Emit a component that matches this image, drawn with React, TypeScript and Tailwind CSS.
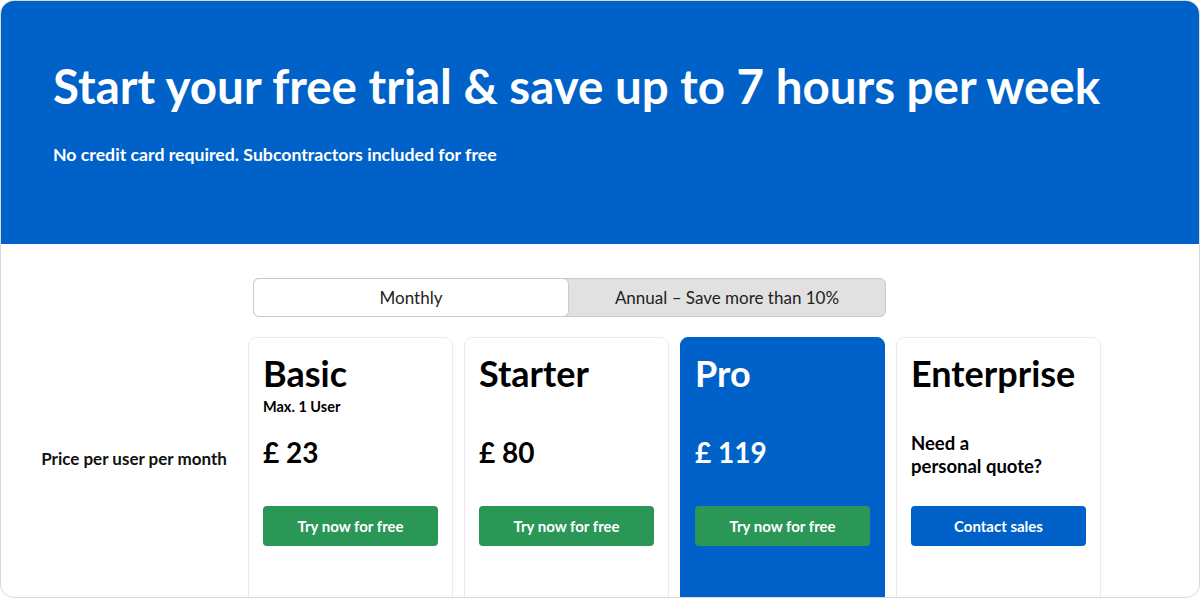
// Pricing header + plan cards, trial signup page.
const plans = [
  { name: "Basic", note: "Max. 1 User", price: "£ 23", cta: "Try now for free", featured: false },
  { name: "Starter", note: "", price: "£ 80", cta: "Try now for free", featured: false },
  { name: "Pro", note: "", price: "£ 119", cta: "Try now for free", featured: true },
];

const PlanCard = ({
  name,
  note,
  price,
  cta,
  featured,
}: {
  name: string;
  note: string;
  price: string;
  cta: string;
  featured: boolean;
}) => (
  <div
    className={`flex h-[300px] w-[205px] flex-col rounded-t-[8px] border px-[14px] pt-[14px] ${
      featured
        ? "border-[#0062c8] bg-[#0062c8] text-white"
        : "border-[#ebebeb] bg-white text-black"
    }`}
  >
    <h3 className="h-[43px] text-[36px] font-bold leading-[1.2]">{name}</h3>
    <div className="h-[41px] pt-[3px] text-[14.5px] font-bold leading-[1.2]">{note}</div>
    <div className="h-[70px] text-[28px] font-bold leading-[1.2]">{price}</div>
    <button className="h-[40px] w-full rounded-[4px] bg-[#2a9757] text-[15px] font-bold text-white">
      {cta}
    </button>
  </div>
);

export default function App() {
  return (
    <div className="h-[598px] w-[1200px] overflow-hidden rounded-[14px] border border-[#d9d9d9] bg-white font-['Lato',sans-serif]">
      <header className="h-[243px] bg-[#0062c8] pl-[52px] pt-[56px] text-white">
        <h1 className="text-[47.5px] font-bold leading-[1.2]">
          Start your free trial &amp; save up to 7 hours per week
        </h1>
        <p className="mt-[30px] text-[17.7px] font-bold leading-[1.2]">
          No credit card required. Subcontractors included for free
        </p>
      </header>

      <div className="pt-[34px]">
        <div className="ml-[252px] flex h-[39px] w-[633px] rounded-[6px] border border-[#c9c9c9] bg-[#e1e1e1] text-[17px] text-[#222]">
          <button className="-my-px -ml-px w-[316px] rounded-[6px] border border-[#c9c9c9] bg-white">
            Monthly
          </button>
          <button className="flex-1">Annual – Save more than 10%</button>
        </div>

        <div className="mt-[20px] flex gap-[11px]">
          <div className="w-[236px] pl-[30px] pt-[112px] text-center text-[17px] font-bold leading-[1.2] text-[#111]">
            Price per user per month
          </div>
          {plans.map((p) => (
            <PlanCard key={p.name} {...p} />
          ))}
          <div className="flex h-[300px] w-[205px] flex-col rounded-t-[8px] border border-[#ebebeb] bg-white px-[14px] pt-[14px] text-black">
            <h3 className="h-[43px] text-[36px] font-bold leading-[1.2]">Enterprise</h3>
            <div className="h-[37px]" />
            <div className="h-[74px] text-[18.5px] font-bold leading-[23px]">
              Need a
              <br />
              personal quote?
            </div>
            <button className="h-[40px] w-full rounded-[4px] bg-[#0062c8] text-[15px] font-bold text-white">
              Contact sales
            </button>
          </div>
        </div>
      </div>
    </div>
  );
}
